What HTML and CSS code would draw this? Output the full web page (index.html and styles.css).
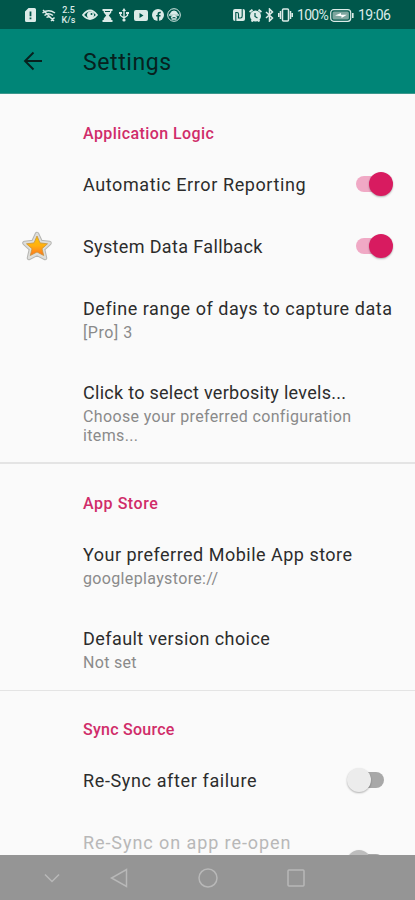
FILE: index.html
```html
<!DOCTYPE html>
<html lang="en">
<head>
<meta charset="utf-8">
<title>Settings</title>
<link rel="stylesheet" href="styles.css">
</head>
<body>
<div class="screen">
  <header class="status">
    <div class="status-left">
      <svg class="glyph" width="11" height="14" viewBox="0 0 11 14"><path fill="currentColor" fill-rule="evenodd" d="M3.5 0H9.5Q11 0 11 1.5V12.5Q11 14 9.500 14H1.500Q0 14 0 12.500V3.500ZM4.600 3.500V8.200H6.400V3.500ZM4.600 9.500V11.200H6.400V9.500Z"/></svg>
      <svg class="glyph wifi" width="14" height="13" viewBox="0 0 14 13" fill="none" stroke="currentColor" stroke-width="1.500"><path d="M.5 4Q6.500-.5 13 4M2.500 6.500Q6.500 3 11 6.500M4.500 8.500Q6.500 7 8.500 8.500M1 1L12 12M9 12L12.500 8.500"/></svg>
      <div class="speed"><span>2.5</span><span>K/s</span></div>
      <svg class="glyph eye" width="16" height="12" viewBox="0 0 16 12"><path fill="none" stroke="currentColor" stroke-width="1.800" d="M1 6Q8-3 15 6Q8 14 1 6Z"/><circle cx="8.500" cy="6" r="3.500" fill="currentColor"/><circle cx="9.500" cy="5" r="1" fill="#00574b"/></svg>
      <svg class="glyph hourglass" width="11" height="13" viewBox="0 0 11 13"><path fill="currentColor" d="M.5 0H10.500V2H9.300V3.500L6.800 6.500L9.300 9.500V11H10.500V13H.5V11H1.700V9.500L4.200 6.500L1.700 3.500V2H.5Z"/><path stroke="#00574b" d="M3 2.500H8" fill="none"/></svg>
      <svg class="glyph usb" width="10" height="14" viewBox="0 0 10 14"><path fill="none" stroke="currentColor" stroke-width="1.300" d="M5 2V12M1.500 5V7.500L5 10L8.500 7.500V5"/><path fill="currentColor" d="M5 0L7 3H3ZM0 4H3V6H0ZM7 4H10V6H7Z"/><circle cx="5" cy="12" r="1.600" fill="currentColor"/></svg>
      <svg class="glyph video" width="14" height="11" viewBox="0 0 14 11"><path fill="currentColor" fill-rule="evenodd" d="M2 0H12Q14 0 14 2V9Q14 11 12 11H2Q0 11 0 9V2Q0 0 2 0ZM5.500 3V8L9.500 5.500Z"/></svg>
      <svg class="glyph social" width="12" height="12" viewBox="0 0 12 12"><circle cx="6" cy="6" r="6" fill="currentColor"/><path fill="none" stroke="#00574b" stroke-width="1.600" d="M6.300 12V5Q6.300 3.200 8.800 3.500M4.200 6.800H8.500"/></svg>
      <svg class="glyph badge" width="14" height="14" viewBox="0 0 14 14" fill="none" stroke="currentColor"><circle cx="7" cy="7" r="6.300"/><path fill="currentColor" d="M3.500 6Q4 3 7 3Q10 3 10.500 6Z"/><path stroke-width="1.400" d="M2 7H12M4 9.500L7 8L10 9.500M4.500 11H9.500"/></svg>
    </div>
    <div class="status-right">
      <svg class="glyph" width="12" height="12" viewBox="0 0 12 12"><path fill="currentColor" d="M2 0H10Q12 0 12 2V10Q12 12 10 12H2Q0 12 0 10V2Q0 0 2 0Z"/><path fill="none" stroke="#00574b" stroke-width="1.100" d="M2.800 12V3.500H4Q5.500 3.500 5.500 5V9H7.500M9.200 0V7Q9.200 9 7.500 9"/></svg>
      <svg class="glyph alarm" width="13" height="13" viewBox="0 0 13 13"><circle cx="6.500" cy="7" r="5.500" fill="currentColor"/><path stroke="currentColor" stroke-width="2" d="M.5 3L3.500 .8M12.500 3L9.500 .8M2.500 12.500L4 11M10.500 12.500L9 11"/><path fill="none" stroke="#00574b" stroke-width="1.200" d="M6 4V7.500L8.500 9"/></svg>
      <svg class="glyph bluetooth" width="9" height="14" viewBox="0 0 9 14" fill="none" stroke="currentColor" stroke-width="1.500"><path d="M1 4L7.500 10L4.500 13V1L7.500 4L1 10"/></svg>
      <svg class="glyph vibrate" width="15" height="14" viewBox="0 0 15 14" fill="none" stroke="currentColor" stroke-width="1.500"><rect x="4.500" y="1" width="6" height="12" rx="1"/><path d="M2.500 3V11M.7 5V9M12.500 3V11M14.300 5V9"/></svg>
      <span class="percent">100%</span>
      <svg class="glyph battery" width="24" height="13" viewBox="0 0 24 13"><rect x=".7" y=".7" width="20" height="11.600" rx="3" fill="none" stroke="currentColor" stroke-width="1.200"/><rect x="2.500" y="2.500" width="16.400" height="8" rx="1.500" fill="#7ea69f"/><path fill="#fff" d="M5 6.500L11 4V5.800H17L11.500 9V7.200Z"/><path stroke="currentColor" stroke-width="1.600" d="M22.800 4V9"/></svg>
      <span class="clock">19:06</span>
    </div>
  </header>
  <div class="appbar">
    <svg class="back" width="20" height="20" viewBox="0 0 20 20" fill="none" stroke="#07211e" stroke-width="1.900"><path d="M19 10H2M10.500 1.500L2 10L10.500 18.500"/></svg>
    <h1>Settings</h1>
  </div>
  <main class="list">
    <section>
      <h2 class="c1">Application Logic</h2>
      <div class="row"><div class="text"><p class="title t1">Automatic Error Reporting</p></div><span class="switch on"></span></div>
      <div class="row">
        <svg class="star" width="32" height="32" viewBox="0 0 32 32"><defs><linearGradient id="gold" x1="0" y1="0" x2="0" y2="1"><stop offset="0" stop-color="#ffc400"/><stop offset=".5" stop-color="#ffb010"/><stop offset="1" stop-color="#ff741f"/></linearGradient></defs><g stroke-linejoin="round"><path d="M16 4L19.700 12L28.500 13L22 19L24 28L16 23.800L8 28L10 19L3.500 13L12.300 12Z" fill="#ddd" stroke="#b5b5b2" stroke-width="4.500"/><path d="M16 4L19.700 12L28.500 13L22 19L24 28L16 23.800L8 28L10 19L3.500 13L12.300 12Z" fill="#ddd" stroke="#dededb" stroke-width="2.500"/><path d="M16 6L19 12.900L26.500 13.800L21 18.700L22.700 25.500L16 22L9.300 25.500L11 18.700L5.500 13.800L13 12.900Z" fill="url(#gold)" stroke="#c9943a" stroke-width=".8"/></g></svg>
        <div class="text"><p class="title t2">System Data Fallback</p></div><span class="switch on"></span>
      </div>
      <div class="row double"><div class="text"><p class="title t3">Define range of days to capture data</p><p class="summary s1">[Pro] 3</p></div></div>
      <div class="row triple"><div class="text"><p class="title t4">Click to select verbosity levels...</p><p class="summary s2">Choose your preferred configuration<br>items...</p></div></div>
    </section>
    <section class="divided">
      <h2 class="c2">App Store</h2>
      <div class="row double"><div class="text"><p class="title t5">Your preferred Mobile App store</p><p class="summary s3">googleplaystore://</p></div></div>
      <div class="row double last"><div class="text"><p class="title t6">Default version choice</p><p class="summary s4">Not set</p></div></div>
    </section>
    <section class="divided thin">
      <h2 class="c3">Sync Source</h2>
      <div class="row"><div class="text"><p class="title t7">Re-Sync after failure</p></div><span class="switch off"></span></div>
      <div class="row disabled"><div class="text"><p class="title t8">Re-Sync on app re-open</p></div><span class="switch off low"></span></div>
    </section>
  </main>
  <nav class="navbar">
    <svg width="16" height="10" viewBox="0 0 16 10"><path d="M1 1.500L8 8.500L15 1.500"/></svg>
    <svg width="18" height="20" viewBox="0 0 18 20"><path d="M16.500 1.500V18.500L1.500 10Z"/></svg>
    <svg width="20" height="20" viewBox="0 0 20 20"><circle cx="10" cy="10" r="9"/></svg>
    <svg width="18" height="18" viewBox="0 0 18 18"><rect x="1" y="1" width="16" height="16" rx="1"/></svg>
  </nav>
</div>
</body>
</html>
```
FILE: styles.css
```css
* { box-sizing: border-box; }
body { margin: 0; background: #fafafa; font-family: Roboto, "Liberation Sans", sans-serif; }
h1, h2, p { margin: 0; font-weight: 400; white-space: nowrap; }
svg { display: block; flex: none; }
.screen { display: flex; flex-direction: column; width: 415px; height: 900px; overflow: hidden; }

.status { display: flex; justify-content: space-between; height: 29px; flex: none; padding: 1px 25px 0 25px; background: #00574b; color: #dcebe8; }
.status-left, .status-right { display: flex; align-items: center; }
.wifi { margin-left: 6px; }
.speed { display: flex; flex-direction: column; width: 15px; margin-left: 5px; font-size: 9px; line-height: 10px; font-weight: 500; text-align: center; }
.eye { margin-left: 6px; }
.hourglass { margin-left: 4px; }
.usb { margin-left: 6px; }
.video { margin-left: 5px; }
.social { margin-left: 4px; }
.badge { margin-left: 3px; }
.alarm { margin-left: 4px; }
.bluetooth { margin-left: 3px; }
.vibrate { margin-left: 4px; }
.percent { width: 31px; margin-left: 4px; font-size: 14px; letter-spacing: -.7px; }
.battery { margin-left: 2px; }
.clock { width: 32px; margin-left: 4px; font-size: 14px; letter-spacing: -.5px; }

.appbar { display: flex; align-items: center; height: 65px; flex: none; padding: 0 0 0 23px; background: #008577; border-bottom: 1px solid #3c978c; }
.appbar h1 { margin-left: 40px; padding-top: 4px; color: #07211e; font-size: 23px; line-height: 30px; letter-spacing: .6px; }

.list { flex: 1; min-height: 0; overflow: hidden; }
.divided { border-top: 2px solid #e4e4e4; }
.thin { border-top-width: 1px; }
h2 { height: 60px; padding: 30px 0 0 83px; font-size: 16px; line-height: 20px; font-weight: 500; color: #d02c69; }
.divided h2 { padding-top: 30px; }
.thin h2 { height: 59px; padding-top: 29px; }
.row { display: flex; height: 62px; padding: 0 22px 0 83px; }
.double { height: 84px; }
.triple { height: 100px; }
.last { height: 82px; }
.text { flex: 1; padding-top: 19px; }
.title { font-size: 18px; line-height: 24px; color: #2c2c2c; }
.summary { margin-top: 2px; font-size: 16px; line-height: 19px; color: #8a8a8a; }
.triple .summary { margin-top: 2px; }
.disabled .title { color: #b8b8b8; }
.c1 { letter-spacing: .42px; }
.c2 { letter-spacing: .55px; }
.c3 { letter-spacing: .25px; }
.t1 { letter-spacing: .6px; }
.t2 { letter-spacing: .36px; }
.t3 { letter-spacing: .55px; }
.t4 { letter-spacing: .28px; }
.t5 { letter-spacing: .49px; }
.t6 { letter-spacing: .44px; }
.t7 { letter-spacing: .63px; }
.t8 { letter-spacing: .92px; }
.s1 { letter-spacing: .55px; }
.s2 { letter-spacing: .35px; }
.s3 { letter-spacing: .35px; }
.s4 { letter-spacing: .3px; }
.star { margin: 14px 14px 0 -62px; width: 32px; }
.star + .text { margin-left: 16px; }

.switch { position: relative; width: 37px; height: 24px; margin-top: 18px; flex: none; }
.switch::before { content: ""; position: absolute; top: 4px; left: 0; width: 32px; height: 16px; border-radius: 8px; background: #f0a9c5; }
.switch::after { content: ""; position: absolute; top: 0; right: 0; width: 24px; height: 24px; border-radius: 50%; background: #d81b60; box-shadow: 0 1px 2px rgba(0, 0, 0, .3); }
.off { width: 46px; }
.off::before { left: 6px; width: 31px; background: #a8a8a8; }
.off::after { right: auto; left: 0; background: #ececec; }
.low { margin-top: 38px; }
.low::after { background: #bdbdbd; }

.navbar { display: grid; grid-template-columns: 104px 30px 148px 28px; align-items: center; justify-items: center; height: 45px; flex: none; background: #959595; }
.navbar svg { fill: none; stroke: #b8b8b8; stroke-width: 1.500; }
```
